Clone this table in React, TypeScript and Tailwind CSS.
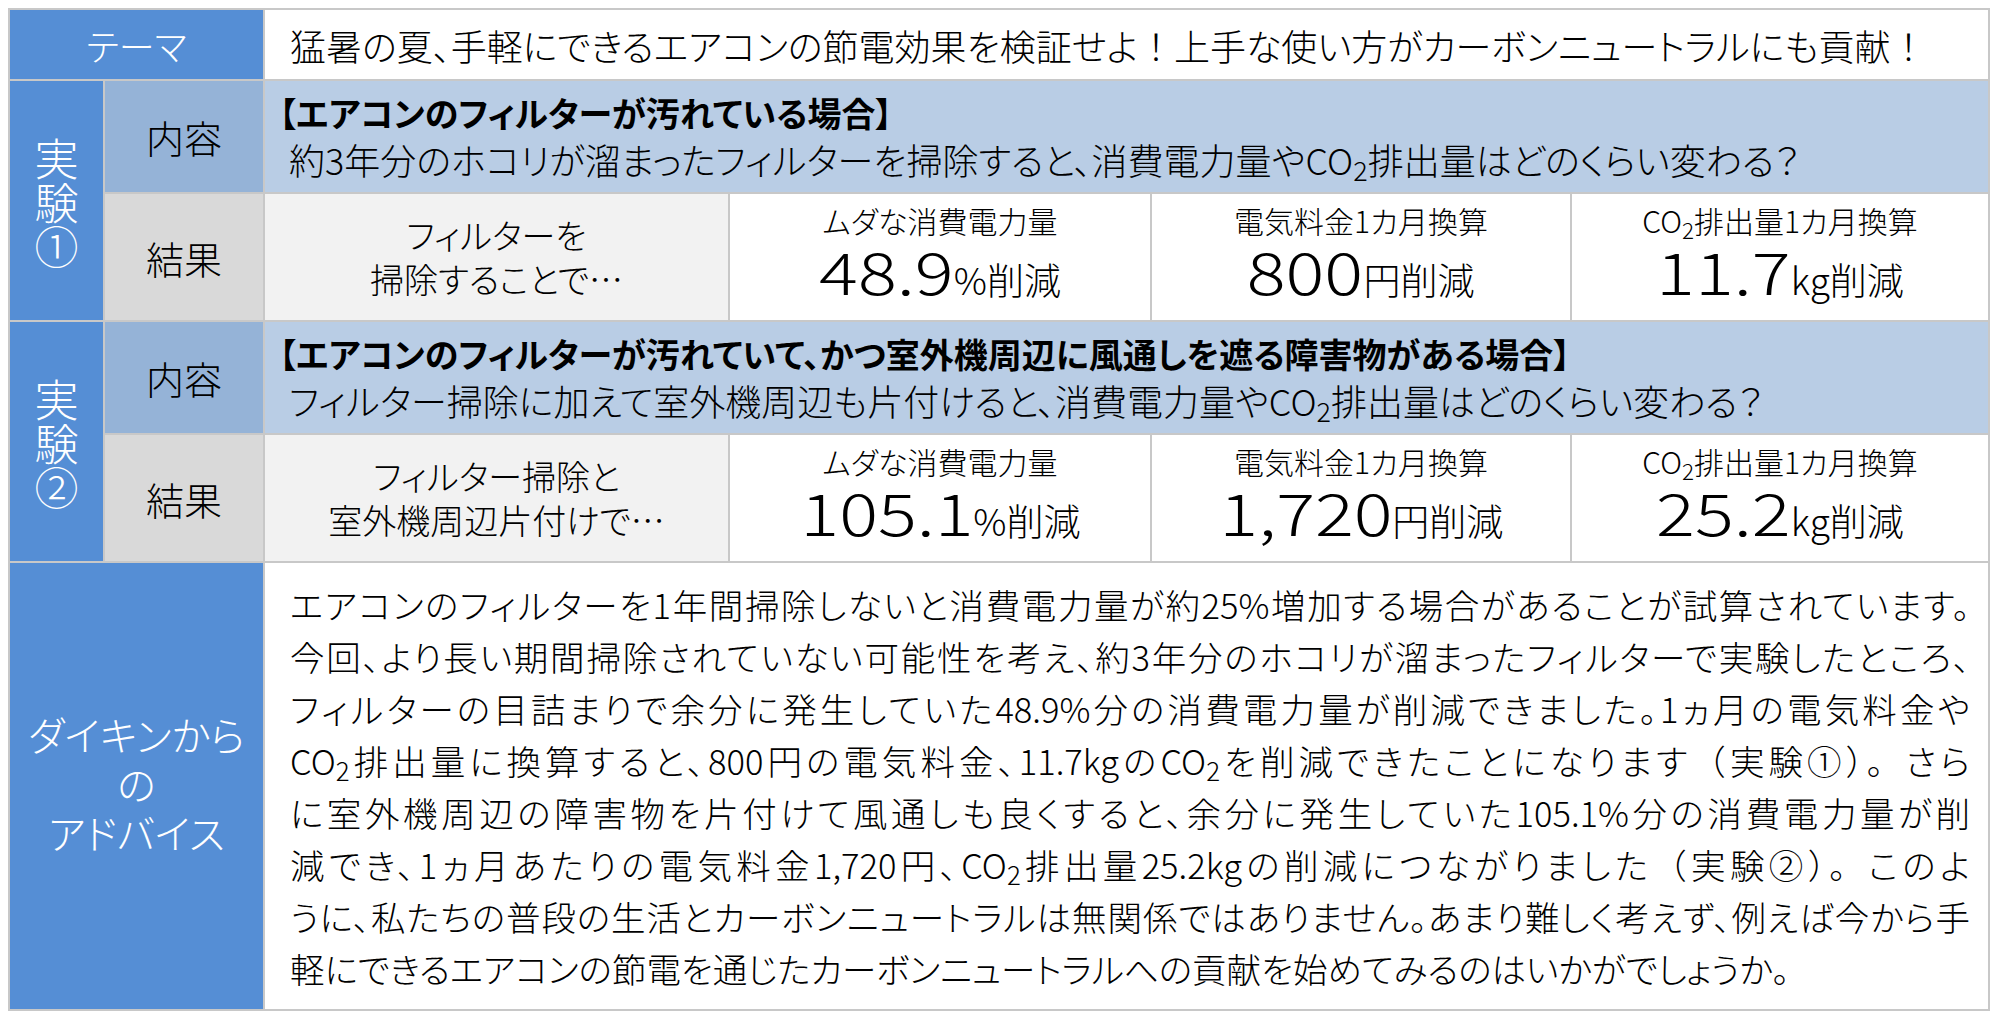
import type { ReactNode } from 'react';

const font = "font-['Noto_Sans_CJK_JP','Noto_Sans',sans-serif] [font-feature-settings:'palt']";

const Co2 = () => (
  <>
    CO<sub>2</sub>
  </>
);

// 全角の約物（palt を外す）
const Wide = ({ children }: { children: ReactNode }) => (
  <span className="[font-feature-settings:normal]">{children}</span>
);

interface ResultItem {
  label: ReactNode;
  value: string;
  unit: string;
  pad: string;
}

const ResultCell = ({ item }: { item: ResultItem }) => (
  <div className="bg-white flex flex-col items-center justify-center text-black pt-[4px]">
    <div className="text-[30px] leading-[40px]">{item.label}</div>
    <div className="leading-[60px] whitespace-nowrap">
      <span className={`inline-block origin-right scale-x-[1.25] text-[58px] ${item.pad}`}>{item.value}</span>
      <span className="text-[37px]">{item.unit}</span>
    </div>
  </div>
);

const Experiment = ({
  no,
  title,
  question,
  desc,
  results,
}: {
  no: string;
  title: string;
  question: ReactNode;
  desc: ReactNode;
  results: ResultItem[];
}) => (
  <>
    {/* 実験ラベル */}
    <div className="row-span-2 bg-[#558ED5] text-white flex flex-col items-center justify-center text-[44px] leading-[44px]">
      <span>実</span>
      <span>験</span>
      <span>{no}</span>
    </div>
    <div className="bg-[#95B3D7] flex items-center justify-center text-[38px]">内容</div>
    <div className="col-span-4 bg-[#B9CDE5] flex flex-col justify-center pl-[24px] text-black whitespace-nowrap">
      <div className="font-bold text-[34px] leading-[44px] -ml-[10px]">{title}</div>
      <div className="text-[36px] leading-[48px]">{question}</div>
    </div>
    <div className="bg-[#D9D9D9] flex items-center justify-center text-[38px]">結果</div>
    <div className="bg-[#F2F2F2] flex flex-col items-center justify-center text-[34px] leading-[44px] text-black">
      {desc}
    </div>
    {results.map((r, i) => (
      <ResultCell key={i} item={r} />
    ))}
  </>
);

const adviceLines: ReactNode[] = [
  'エアコンのフィルターを1年間掃除しないと消費電力量が約25%増加する場合があることが試算されています。',
  '今回、より長い期間掃除されていない可能性を考え、約3年分のホコリが溜まったフィルターで実験したところ、',
  'フィルターの目詰まりで余分に発生していた48.9%分の消費電力量が削減できました。1ヵ月の電気料金や',
  <>
    <Co2 />排出量に換算すると、800円の電気料金、11.7kgの<Co2 />を削減できたことになります<Wide>（実験①）。</Wide>さら
  </>,
  'に室外機周辺の障害物を片付けて風通しも良くすると、余分に発生していた105.1%分の消費電力量が削',
  <>
    減でき、1ヵ月あたりの電気料金1,720円、<Co2 />排出量25.2kgの削減につながりました<Wide>（実験②）。</Wide>このよ
  </>,
  'うに、私たちの普段の生活とカーボンニュートラルは無関係ではありません。あまり難しく考えず、例えば今から手',
];

export default function App() {
  return (
    <div className={`min-h-screen bg-white pl-[8px] pt-[8px] font-light ${font}`}>
      <div className="w-[1982px] grid grid-cols-[93px_158px_463px_420px_418px_416px] grid-rows-[69px_111px_126px_111px_126px_446px] gap-[2px] p-[2px] bg-[#C8C8C8] text-black">
        {/* テーマ */}
        <div className="col-span-2 bg-[#558ED5] text-white flex items-center justify-center text-[36px]">テーマ</div>
        <div className="col-span-4 bg-white flex items-center pl-[25px] text-[36px] whitespace-nowrap">
          猛暑の夏、手軽にできるエアコンの節電効果を検証せよ<Wide>！</Wide>上手な使い方がカーボンニュートラルにも貢献<Wide>！</Wide>
        </div>

        <Experiment
          no="①"
          title="【エアコンのフィルターが汚れている場合】"
          question={
            <>
              約3年分のホコリが溜まったフィルターを掃除すると、消費電力量や<Co2 />排出量はどのくらい変わる？
            </>
          }
          desc={
            <>
              <span>フィルターを</span>
              <span>掃除することで…</span>
            </>
          }
          results={[
            { label: 'ムダな消費電力量', value: '48.9', unit: '%削減', pad: 'ml-[27px]' },
            { label: '電気料金1カ月換算', value: '800', unit: '円削減', pad: 'ml-[23px]' },
            { label: <><Co2 />排出量1カ月換算</>, value: '11.7', unit: 'kg削減', pad: 'ml-[27px]' },
          ]}
        />

        <Experiment
          no="②"
          title="【エアコンのフィルターが汚れていて、かつ室外機周辺に風通しを遮る障害物がある場合】"
          question={
            <>
              フィルター掃除に加えて室外機周辺も片付けると、消費電力量や<Co2 />排出量はどのくらい変わる？
            </>
          }
          desc={
            <>
              <span>フィルター掃除と</span>
              <span>室外機周辺片付けで…</span>
            </>
          }
          results={[
            { label: 'ムダな消費電力量', value: '105.1', unit: '%削減', pad: 'ml-[35px]' },
            { label: '電気料金1カ月換算', value: '1,720', unit: '円削減', pad: 'ml-[35px]' },
            { label: <><Co2 />排出量1カ月換算</>, value: '25.2', unit: 'kg削減', pad: 'ml-[27px]' },
          ]}
        />

        {/* アドバイス */}
        <div className="col-span-2 bg-[#558ED5] text-white flex flex-col items-center justify-center text-[40px] leading-[49px] pb-[6px]">
          <span>ダイキンから</span>
          <span>の</span>
          <span>アドバイス</span>
        </div>
        <div className="col-span-4 bg-white flex flex-col justify-center pl-[25px] text-[34.5px] leading-[52px]">
          {adviceLines.map((line, i) => (
            <div key={i} className="w-[1680px] text-justify [text-align-last:justify]">
              {line}
            </div>
          ))}
          <div className="whitespace-nowrap">
            軽にできるエアコンの節電を通じたカーボンニュートラルへの貢献を始めてみるのはいかがでしょうか。
          </div>
        </div>
      </div>
    </div>
  );
}
